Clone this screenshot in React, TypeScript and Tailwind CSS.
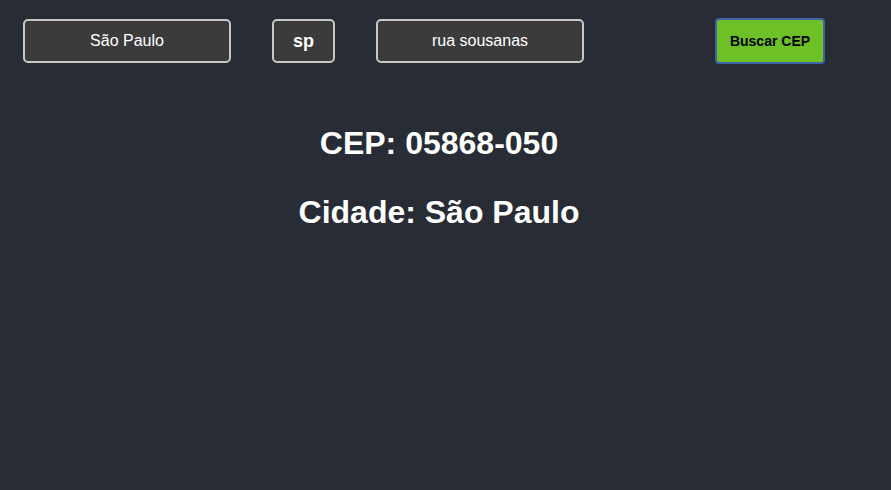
import React from 'react';

export default function App() {
  return (
    <div className="min-h-[490px] w-full bg-[#282c34] text-white" style={{ fontFamily: '"Liberation Sans", Arial, sans-serif' }}>
      <div className="flex items-center pt-[18px] pl-[23px]">
        <input
          defaultValue="São Paulo"
          className="h-[44px] w-[208px] rounded-[5px] border-2 border-[#c8c8c8] bg-[#3b3b3b] text-center text-[16px] text-white outline-none"
        />
        <input
          defaultValue="sp"
          className="ml-[41px] h-[44px] w-[63px] rounded-[5px] border-2 border-[#c8c8c8] bg-[#3b3b3b] text-center text-[18px] font-bold text-white outline-none"
        />
        <input
          defaultValue="rua sousanas"
          className="ml-[41px] h-[44px] w-[208px] rounded-[5px] border-2 border-[#c8c8c8] bg-[#3b3b3b] text-center text-[16px] text-white outline-none"
        />
        <button className="ml-[131px] h-[46px] w-[110px] rounded-[4px] border-2 border-[#3f62a8] bg-[#6dc126] text-[14px] font-bold text-black">
          Buscar CEP
        </button>
      </div>
      <div className="flex flex-col items-center pr-[13px] pt-[61px]">
        <h1 className="text-[32px] font-bold leading-[37px]">CEP: 05868-050</h1>
        <h1 className="mt-[32px] text-[32px] font-bold leading-[37px]">Cidade: São Paulo</h1>
      </div>
    </div>
  );
}
